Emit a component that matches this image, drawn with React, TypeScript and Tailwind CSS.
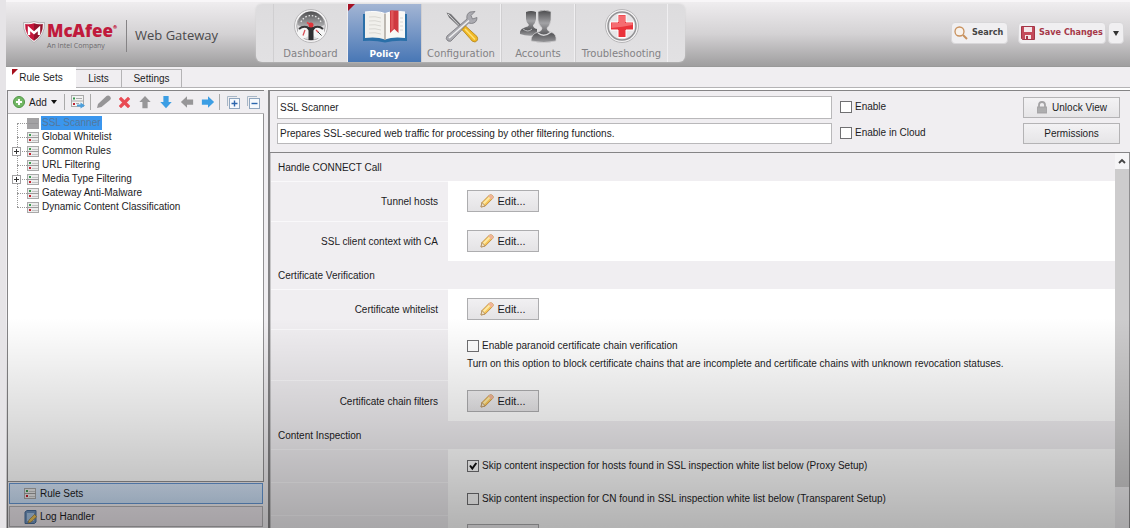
import { useState } from "react";
import type { ReactNode } from "react";

const arrow = "M8 1 14.5 8H11v7H5V8H1.500z";

function RuleIcon({ muted = false }: { muted?: boolean }) {
  if (muted) {
    return (
      <svg width="12" height="11" viewBox="0 0 12 11" className="shrink-0">
        <rect width="12" height="11" fill="#a3a2a4" />
        <path d="M1 5.5h10" stroke="#969597" />
      </svg>
    );
  }
  return (
    <svg width="12" height="11" viewBox="0 0 12 11" className="shrink-0">
      <rect x=".5" y=".5" width="11" height="10" fill="#ececec" stroke="#a9a9a9" />
      <path d="M0 5.5h12" stroke="#9c9c9c" />
      <path d="M5 3.5h6M5 8.5h6" stroke="#c4c4c4" />
      <rect x="2" y="2" width="2" height="2" fill="#3d9b50" />
      <rect x="2" y="7" width="2" height="2" fill="#c4202f" />
    </svg>
  );
}

function ShieldLogo() {
  return (
    <svg width="24" height="24" viewBox="0 0 24 24" className="shrink-0">
      <path d="M1.500 2.500Q7 3.500 12 1.500 17 3.500 22.500 2.500 23.500 15 12 22.500.500 15 1.500 2.500z" fill="#f6f4f5" stroke="#aaa8aa" strokeWidth=".8" />
      <path d="M3.200 4Q8 5 12 3.300V20.800Q2.500 15 3.200 4z" fill="#c4163a" />
      <path d="M20.800 4Q16 5 12 3.300V20.800Q21.500 15 20.800 4z" fill="#94122c" />
      <path d="M7 15V8.500l5 4.500 5-4.500V15" fill="none" stroke="#fff" strokeWidth="2.400" />
    </svg>
  );
}

function DashboardIcon() {
  return (
    <svg width="36" height="36" viewBox="0 0 36 36">
      <defs>
        <linearGradient id="dial" x2="0" y2="1">
          <stop stopColor="#4d4d4f" />
          <stop offset="1" stopColor="#b5b5b7" />
        </linearGradient>
      </defs>
      <circle cx="18" cy="18" r="16.5" fill="#f4f3f4" stroke="#b9b8ba" />
      <circle cx="18" cy="18" r="14.3" fill="#dcdbdd" stroke="#969597" strokeWidth=".7" />
      <path d="M4.500 17a13.500 13.500 0 0 1 27 0q-6 3-10 2l-7 0q-5 1-10-2z" fill="url(#dial)" />
      <path d="M8 14a11 11 0 0 1 20 0" fill="none" stroke="#e8e8e8" strokeWidth="1.400" strokeDasharray="1.500 1.800" />
      <circle cx="10.500" cy="24.500" r="5.800" fill="#f6f6f6" />
      <circle cx="25.500" cy="24.500" r="5.800" fill="#f6f6f6" />
      <path d="M13 19h10l-2.500 3.500V32h-5v-9.500z" fill="#303032" />
      <path d="M15 19.500q-5-2-9 1.500M21 19.500q5-2 9 1.500" fill="none" stroke="#39393b" strokeWidth="2" />
      <path d="M14 14.500l4 2.500" stroke="#eb4148" strokeWidth="1.500" />
      <circle cx="18" cy="17" r="2.500" fill="#df343a" />
      <path d="M10 27.500l2-5.500M23 22l2.500 2.500" stroke="#d95058" strokeWidth="1.300" />
      <path d="M25 24l3.500 3.500" stroke="#444" />
    </svg>
  );
}

function PolicyIcon() {
  return (
    <svg width="46" height="36" viewBox="0 0 46 36">
      <path d="M1 6h44v27q-12-1-22 1.500Q13 32 1 33z" fill="#2a6fa8" />
      <path d="M3 4q12-1.500 20 1.500v26Q15 28.500 3 30z" fill="#f1f0ec" />
      <path d="M43 4q-12-1.500-20 1.500v26Q31 28.500 43 30z" fill="#f9f8f5" />
      <path d="M3 4q12-1.500 20 1.500Q31 2.500 43 4" fill="none" stroke="#fff" />
      <path d="M23 5.500v26.500" stroke="#aaa59d" strokeWidth="1.500" />
      <path d="M7 9q6-1 12 1M7 13q6-1 12 1M7 17q6-1 12 1M7 21q6-1 12 1M7 25q6-1 12 1M38 10h3M38 14h3M38 18h3M38 22h3" fill="none" stroke="#d2d0cb" strokeWidth=".8" />
      <path d="M28 2.500h8.500V25l-4.200-4-4.300 4z" fill="#cf3a40" />
      <path d="M29 2.500h2.500v18L29 23z" fill="#df5558" />
    </svg>
  );
}

function ToolsIcon() {
  return (
    <svg width="36" height="36" viewBox="0 0 36 36">
      <path d="M3.500 4.500l4.500 1.500 15 16-1.800 1.800L6 9.500z" fill="#77777a" />
      <path d="M5 6l16 16.500" stroke="#d6d6d8" strokeWidth="1" />
      <path d="M5 33q-3-2-1-5L24 11q-1-5 3-7l5-.5-4 4 1.500 3.500L34 9.500q0 5.500-5.500 6l-3-.5L10 31q-2 3.500-5 2z" fill="#aaaab0" stroke="#77777c" strokeWidth=".8" />
      <path d="M6 30L26 12.500" stroke="#f0f0f2" strokeWidth="1.500" />
      <path d="M19 21.500l3.500-3.500L34 28.500q2 4-2 5.500-3 0-5-3.500z" fill="#f0b824" stroke="#b08018" strokeWidth=".8" />
      <path d="M22 21l10 10.500" stroke="#ffe27b" strokeWidth="1.500" />
    </svg>
  );
}

function AccountsIcon() {
  return (
    <svg width="40" height="36" viewBox="0 0 40 36">
      <defs>
        <linearGradient id="person" x2="0" y2="1">
          <stop stopColor="#4b4b4d" />
          <stop offset=".4" stopColor="#a2a2a5" />
          <stop offset=".75" stopColor="#5d5d60" />
          <stop offset="1" stopColor="#9a9a9d" />
        </linearGradient>
      </defs>
      <path d="M8 4q5-2 10 0v7q-1 5-3 6 0 3 4 4v6Q10 29 2 26q-1-5 6-7 2 0 3-2-3-3-3-6z" fill="url(#person)" />
      <path d="M20 3.500q6-2.500 13 0V12q-1 6-4 8 0 3 4 4 6 2 5 9-12 3-25 0 0-7 7-9 4-1 4-4-4-4-4-8z" fill="url(#person)" stroke="#d5d4d6" strokeWidth=".7" />
      <path d="M20 25q6 5 13-1" fill="none" stroke="#d8d8da" strokeWidth="1.300" />
      <path d="M5 21q5 4 9 0" fill="none" stroke="#bdbdc0" />
    </svg>
  );
}

function TroubleIcon() {
  return (
    <svg width="36" height="36" viewBox="0 0 36 36">
      <circle cx="18" cy="18" r="16.500" fill="#f4f3f4" stroke="#b7b6b8" />
      <circle cx="18" cy="18" r="14" fill="#e7e6e8" stroke="#929294" strokeWidth="1.500" />
      <path d="M14 6.500h8V14h7.500v8H22v7.500h-8V22H6.500v-8H14z" fill="#ea333b" stroke="#fff" strokeWidth="1" />
      <path d="M15 7.500h6V15h7.500v2q-10 2-21 3v-5H15z" fill="#f56c71" />
    </svg>
  );
}

function PencilIcon() {
  return (
    <svg width="14" height="14" viewBox="0 0 14 14" className="shrink-0">
      <path d="M1 13l1-4.500L9.500 1q2-.8 3.500 1.200.5 1.300-.3 2.200L5.200 12z" fill="#f6c659" stroke="#c08a3c" strokeWidth=".9" />
      <path d="M3.500 9.500L10 3" stroke="#fde9a6" strokeWidth="2" />
      <path d="M9.500 1q2-.8 3.500 1.200.5 1.300-.3 2.200L11.500 5.500 8.300 2.300z" fill="#f0b49a" />
      <path d="M1 13l1-4.500 3.200 3.500z" fill="#efe0c4" stroke="#a8865a" strokeWidth=".7" />
    </svg>
  );
}

function Arrow({ turn, color }: { turn: string; color: string }) {
  return (
    <svg width="14" height="14" viewBox="0 0 16 16" className={turn}>
      <path d={arrow} fill={color} />
    </svg>
  );
}

function ExpandIcon({ plus = false }: { plus?: boolean }) {
  return (
    <svg width="13" height="13" viewBox="0 0 13 13">
      <path d="M.5 10V.5H10" fill="none" stroke="#a9b7c6" />
      <rect x="2.500" y="2.500" width="10" height="10" fill="#f6f9fd" stroke="#8fa6bf" />
      <path d={plus ? "M4.500 7.500h6M7.500 4.500v6" : "M4.500 7.500h6"} stroke="#2c66ad" strokeWidth="1.400" />
    </svg>
  );
}

const nav = [
  { label: "Dashboard", width: "w-[75px]", icon: <DashboardIcon /> },
  { label: "Policy", width: "w-[73px]", icon: <PolicyIcon />, active: true },
  { label: "Configuration", width: "w-[80px]", icon: <ToolsIcon /> },
  { label: "Accounts", width: "w-[74px]", icon: <AccountsIcon /> },
  { label: "Troubleshooting", width: "w-[93px]", icon: <TroubleIcon /> },
];

const ruleSets = [
  { name: "SSL Scanner", selected: true },
  { name: "Global Whitelist" },
  { name: "Common Rules", group: true },
  { name: "URL Filtering" },
  { name: "Media Type Filtering", group: true },
  { name: "Gateway Anti-Malware" },
  { name: "Dynamic Content Classification" },
];

function Check({ label, defaultChecked = false }: { label: string; defaultChecked?: boolean }) {
  return (
    <label className="flex items-center gap-[3px] whitespace-nowrap">
      <span className="grid">
        <input
          type="checkbox"
          defaultChecked={defaultChecked}
          className="peer col-start-1 row-start-1 size-3 appearance-none border border-[#707072] bg-white"
        />
        <svg viewBox="0 0 12 12" className="pointer-events-none col-start-1 row-start-1 hidden size-3 peer-checked:block">
          <path d="M3 5.500l2.300 3L9.300 3" fill="none" stroke="#111" strokeWidth="2" />
        </svg>
      </span>
      {label}
    </label>
  );
}

function EditButton({ label }: { label: string }) {
  return (
    <button
      aria-label={`Edit ${label}`}
      className="flex h-[22px] w-[72px] items-center justify-center gap-[3px] border border-[#adadaf] bg-linear-to-b from-[#f1f0f2] to-[#e4e3e5]"
    >
      <PencilIcon />
      <span className="text-[11px] leading-3">Edit...</span>
    </button>
  );
}

function SectionTitle({ children }: { children: ReactNode }) {
  return <h2 className="flex h-7 shrink-0 items-center bg-[#f0eef1] pl-[7px]">{children}</h2>;
}

function Row({ label, height, children }: { label?: string; height: string; children: ReactNode }) {
  return (
    <div className={`flex shrink-0 ${height}`}>
      <div className="flex w-[177px] shrink-0 items-center justify-end border-t border-[#f9f8fa] bg-[#f0eef1] pr-2.5">
        {label}
      </div>
      <div className="flex flex-1 flex-col justify-center pl-[19px]">{children}</div>
    </div>
  );
}

function Header() {
  return (
    <header className="flex h-[67px] shrink-0 items-start border-t-2 border-[#f8f6f8] border-b border-b-[#999] bg-linear-to-b from-[#efedef] via-[#d4d2d4] to-[#9f9e9f]">
      <div className="flex w-[250px] shrink-0 pt-[18px] pl-4">
        <ShieldLogo />
        <div className="w-20 pl-px font-['Open_Sans',sans-serif]">
          <div className="flex text-[17px] leading-[22px] font-extrabold text-[#c01a3c]">
            McAfee<span className="text-[5px] leading-[14px]">®</span>
          </div>
          <div className="text-[7px] leading-2 whitespace-nowrap text-[#6c6b6d]">An Intel Company</div>
        </div>
        <div className="flex h-8 items-center border-l border-[#858385] pl-2 font-['Open_Sans',sans-serif] text-[13px] whitespace-nowrap text-[#4a494b]">
          Web Gateway
        </div>
      </div>
      <nav className="mt-0.5 flex h-[58px] rounded-md bg-linear-to-b from-[#dddcde] to-[#e2e1e3] px-[17px] font-['DejaVu_Sans',sans-serif] shadow-[0_0_2px_#ccc]">
        {nav.map((item) => (
          <button
            key={item.label}
            className={`relative flex flex-col items-center pt-1 ${item.width} ${
              item.active
                ? "bg-linear-to-b from-[#a3b5d4] to-[#4877b5] text-[9px] font-bold text-white"
                : "border-x border-l-[#d0cfd1] border-r-[#f0eff1] text-[10px] text-[#838285]"
            }`}
          >
            {item.active && (
              <svg width="7" height="7" className="absolute top-0 left-0">
                <path d="M0 0h7L0 7z" fill="#a50f24" />
              </svg>
            )}
            {item.icon}
            <span className="mt-1 leading-3">{item.label}</span>
          </button>
        ))}
      </nav>
      <div className="mt-5 ml-auto flex pr-1.5 font-['DejaVu_Sans_Condensed','DejaVu_Sans',sans-serif] text-[9px] font-bold">
        <button className="flex h-[22px] w-[57px] items-center gap-1 rounded-sm border border-[#d8d7d9] bg-[#f0eff1] pl-0.5 text-[#444]">
          <svg width="14" height="14" viewBox="0 0 14 14" className="shrink-0">
            <circle cx="5.500" cy="5.500" r="4.500" fill="#f8f2ec" stroke="#c8905c" strokeWidth="1.300" />
            <path d="M9 9l4 4" stroke="#c8905c" strokeWidth="2" />
          </svg>
          Search
        </button>
        <button className="ml-2.5 flex h-[22px] w-[88px] items-center gap-1 rounded-sm border border-[#d8d7d9] bg-[#f0eff1] pl-0.5 whitespace-nowrap text-[#a63848]">
          <svg width="14" height="14" viewBox="0 0 14 14" className="shrink-0">
            <path d="M.5.5h13v13H1.500l-1-1z" fill="#c44a5a" stroke="#a33546" />
            <path d="M3 1h8v5H3zM4 9h6v4H4z" fill="#f3e6e9" />
            <path d="M5 10h2v3H5z" fill="#a33546" />
          </svg>
          Save Changes
        </button>
        <button aria-label="Save options" className="ml-0.5 flex h-[22px] w-4 items-center justify-center rounded-sm border border-[#d8d7d9] bg-[#f0eff1]">
          <svg width="6" height="5">
            <path d="M0 0h6L3 5z" fill="#333" />
          </svg>
        </button>
      </div>
    </header>
  );
}

function Tabs({ tab, onTab }: { tab: string; onTab: (name: string) => void }) {
  return (
    <div className="flex h-[21px] shrink-0 items-end border-b border-[#b4b3b5]">
      {[
        { name: "Rule Sets", width: "w-[70px]" },
        { name: "Lists", width: "w-[46px]" },
        { name: "Settings", width: "w-[60px]" },
      ].map(({ name, width }) => (
        <button
          key={name}
          onClick={() => onTab(name)}
          className={`relative ${width} ${
            tab === name ? "-mb-px h-[21px] bg-white" : "h-[18px] border-t border-r border-[#b4b3b5]"
          }`}
        >
          {tab === name && (
            <svg width="6" height="6" className="absolute top-0.5 left-1.5">
              <path d="M0 0h6L0 6z" fill="#a50f1c" />
            </svg>
          )}
          {name}
        </button>
      ))}
    </div>
  );
}

function Toolbar() {
  return (
    <div className="flex h-[23px] shrink-0 items-center border-b border-[#b4b3b5] bg-[#f0eef1] pl-[5px]">
      <button className="flex w-[44px] items-center">
        <svg width="12" height="12" viewBox="0 0 12 12">
          <circle cx="6" cy="6" r="5.500" fill="#73b765" stroke="#4f9646" />
          <path d="M6 3v6M3 6h6" stroke="#fff" strokeWidth="2" />
        </svg>
        <span className="ml-1">Add</span>
        <svg width="6" height="4" className="ml-auto">
          <path d="M0 0h6L3 4z" fill="#111" />
        </svg>
      </button>
      <span className="ml-[7px] h-4 border-l border-[#aaa]" />
      <button aria-label="Add from library" className="ml-1.5">
        <svg width="14" height="14" viewBox="0 0 14 14">
          <rect x=".5" y=".5" width="12" height="11" fill="#f2f2f2" stroke="#aaa" />
          <path d="M1 6h11M5 3.500h6M5 8.500h3" stroke="#aaa" />
          <rect x="2" y="2.500" width="2" height="2" fill="#329749" />
          <rect x="2" y="8" width="2" height="2" fill="#bf2634" />
          <path d="M6 9.500h3.500V7.500L14 10.500 9.500 13.500V11.500H6z" fill="#4c9fdc" />
        </svg>
      </button>
      <span className="ml-[5px] h-4 border-l border-[#aaa]" />
      <div className="ml-1.5 flex items-center gap-[7px]">
        <button aria-label="Edit">
          <svg width="14" height="14" viewBox="0 0 14 14">
            <path d="M0 13l1-4L9.500 1q2-1 3.500.5t0 3.500L4.500 12z" fill="#969597" />
          </svg>
        </button>
        <button aria-label="Delete">
          <svg width="13" height="13" viewBox="0 0 13 13">
            <path d="M1 3l2-2 3.500 3.300L10 1l2 2-3.300 3.500L12 10l-2 2-3.500-3.300L3 12l-2-2 3.300-3.500z" fill="#e94b54" stroke="#e94b54" strokeWidth=".5" />
          </svg>
        </button>
        <button aria-label="Move up"><Arrow turn="" color="#979698" /></button>
        <button aria-label="Move down"><Arrow turn="rotate-180" color="#3c9ee4" /></button>
        <button aria-label="Move out"><Arrow turn="-rotate-90" color="#979698" /></button>
        <button aria-label="Move in"><Arrow turn="rotate-90" color="#3c9ee4" /></button>
      </div>
      <span className="ml-1 h-4 border-l border-[#aaa]" />
      <div className="ml-[7px] flex gap-[7px]">
        <button aria-label="Expand all"><ExpandIcon plus /></button>
        <button aria-label="Collapse all"><ExpandIcon /></button>
      </div>
    </div>
  );
}

function Sidebar() {
  return (
    <aside className="flex w-[257px] shrink-0 flex-col border-t border-l border-[#858486]">
      <Toolbar />
      <div className="flex-1 border-r border-b border-[#929193] bg-white pt-0.5 pl-1">
        <ul className="relative">
          <li aria-hidden className="absolute top-[7px] bottom-[7px] left-[5px] border-l border-dotted border-[#999]" />
          {ruleSets.map((r) => (
            <li key={r.name} className="flex h-[14px] items-center">
              <span className="relative ml-[5px] w-2.5 border-t border-dotted border-[#999]">
                {r.group && (
                  <svg width="9" height="9" viewBox="0 0 9 9" className="absolute -top-[5px] -left-[5px]">
                    <rect x=".5" y=".5" width="8" height="8" fill="#fff" stroke="#a09fa1" />
                    <path d="M2 4.500h5M4.500 2v5" stroke="#333" />
                  </svg>
                )}
              </span>
              <RuleIcon muted={r.selected} />
              <span
                className={`ml-[2px] px-px leading-[14px] whitespace-nowrap ${r.selected ? "bg-[#3a96ee] text-[#54789c]" : ""}`}
              >
                {r.name}
              </span>
            </li>
          ))}
        </ul>
      </div>
      <div className="flex flex-col gap-0.5 py-px pr-px pl-px">
        <button className="flex h-[21px] items-center gap-1 border border-[#6597d4] bg-linear-to-b from-[#d9e8fb] to-[#cce1f8] pl-3.5">
          <RuleIcon />
          Rule Sets
        </button>
        <button className="flex h-[21px] items-center gap-[3px] border border-[#b3b1b4] bg-[#ebe6eb] pl-3.5">
          <svg width="13" height="14" viewBox="0 0 13 14">
            <path d="M1 2l2-1.500h9V12l-1.500 1.500H1z" fill="#6f94c0" stroke="#486c99" />
            <path d="M3 3h7v8H3z" fill="#a9c6e5" />
            <path d="M4 13l1-3L10.500 4.500l2.200 2.200L7 12z" fill="#efc65a" stroke="#a48038" strokeWidth=".7" />
          </svg>
          Log Handler
        </button>
      </div>
    </aside>
  );
}

function Settings() {
  const field = "w-full border border-[#b9b8ba] bg-white px-0.5 outline-none";
  const action =
    "flex h-[21px] w-[97px] items-center justify-center gap-1 border border-[#b4b3b5] bg-linear-to-b from-[#f3f2f4] to-[#e6e5e7]";
  return (
    <main className="flex min-w-0 flex-1 flex-col border-t border-l-2 border-[#858486]">
      <div className="flex h-[62px] shrink-0 border-b border-[#858486] pt-[5px] pr-2.5 pl-[7px]">
        <div className="flex flex-1 flex-col gap-1">
          <input aria-label="Name" defaultValue="SSL Scanner" className={`${field} h-[23px]`} />
          <input
            aria-label="Description"
            defaultValue="Prepares SSL-secured web traffic for processing by other filtering functions."
            className={`${field} h-[21px]`}
          />
        </div>
        <div className="flex w-[191px] flex-col gap-3.5 pt-[5px] pl-2 leading-3">
          <Check label="Enable" />
          <Check label="Enable in Cloud" />
        </div>
        <div className="flex flex-col gap-[5px] pt-px">
          <button className={action}>
            <svg width="12" height="13" viewBox="0 0 12 13">
              <path d="M3 6V4q0-3 3-3t3 3v2" fill="none" stroke="#a3a2a4" strokeWidth="1.800" />
              <rect x="1" y="5.500" width="10" height="7" fill="#a7a6a8" />
              <path d="M2 8h8M2 10h8" stroke="#bbb" strokeWidth=".7" />
            </svg>
            Unlock View
          </button>
          <button className={action}>Permissions</button>
        </div>
      </div>
      <div className="flex min-h-0 flex-1">
        <div className="flex min-w-0 flex-1 flex-col overflow-hidden border-l border-[#c6c5c7] bg-white">
          <SectionTitle>Handle CONNECT Call</SectionTitle>
          <Row label="Tunnel hosts" height="h-10"><EditButton label="tunnel hosts" /></Row>
          <Row label="SSL client context with CA" height="h-10"><EditButton label="SSL client context" /></Row>
          <SectionTitle>Certificate Verification</SectionTitle>
          <Row label="Certificate whitelist" height="h-10"><EditButton label="certificate whitelist" /></Row>
          <Row height="h-[51px]">
            <Check label="Enable paranoid certificate chain verification" />
            <p className="mt-[3px] whitespace-nowrap">
              Turn on this option to block certificate chains that are incomplete and certificate chains with unknown revocation statuses.
            </p>
          </Row>
          <Row label="Certificate chain filters" height="h-[41px]"><EditButton label="certificate chain filters" /></Row>
          <SectionTitle>Content Inspection</SectionTitle>
          <Row height="h-[33px]">
            <Check defaultChecked label="Skip content inspection for hosts found in SSL inspection white list below (Proxy Setup)" />
          </Row>
          <Row height="h-[33px]">
            <Check label="Skip content inspection for CN found in SSL inspection white list below (Transparent Setup)" />
          </Row>
          <Row height="h-10"><EditButton label="SSL inspection white list" /></Row>
        </div>
        <div className="flex w-[15px] shrink-0 flex-col border-r border-[#8f8e90] bg-[#f0eff1]">
          <button aria-label="Scroll up" className="flex h-4 items-center justify-center bg-[#f6f5f7]">
            <svg width="8" height="6" viewBox="0 0 8 6">
              <path d="M1 5l3-3 3 3" fill="none" stroke="#444" strokeWidth="1.800" />
            </svg>
          </button>
          <div className="h-[318px] bg-[#cdcccd]" />
        </div>
      </div>
    </main>
  );
}

export default function App() {
  const [tab, setTab] = useState("Rule Sets");

  return (
    <div className="relative flex h-screen flex-col overflow-hidden border-l-[6px] border-[#e6e4e7] bg-[#f0eef1] font-['Liberation_Sans',sans-serif] text-[10px] text-[#1c1c1e]">
      <Header />
      <Tabs tab={tab} onTab={setTab} />
      <div className="flex min-h-0 flex-1 gap-1 border-t-2 border-white pl-px">
        <Sidebar />
        <Settings />
      </div>
      <div className="pointer-events-none absolute inset-x-0 -left-1.5 bottom-0 h-[210px] bg-linear-to-b from-transparent via-black/14 to-black/30" />
    </div>
  );
}
